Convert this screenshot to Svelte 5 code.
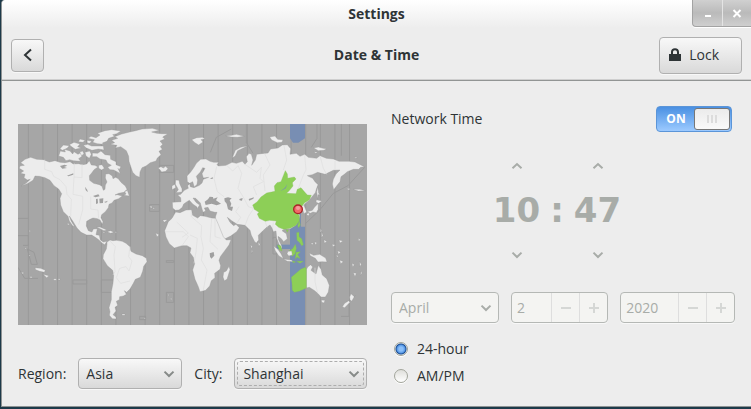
<script>
  let region = $state('Asia');
  let city = $state('Shanghai');
  let networkTime = $state(true);
  let hour = $state(10);
  let minute = $state(47);
  let month = $state('April');
  let day = $state(2);
  let year = $state(2020);
  let format = $state('24h');

  const regions = ['Africa', 'America', 'Asia', 'Australia', 'Europe', 'Pacific'];
  const cities = ['Hong Kong', 'Seoul', 'Shanghai', 'Singapore', 'Tokyo'];
  const months = [
    'January', 'February', 'March', 'April', 'May', 'June', 'July',
    'August', 'September', 'October', 'November', 'December',
  ];

  // One line per hour of UTC offset
  const meridians = Array.from({ length: 23 }, (_, i) => 31 + i * 43.8);

  // Wrap a value inside 0..size-1
  function wrap(value, size) {
    return (value + size) % size;
  }

  function pad(value) {
    return String(value).padStart(2, '0');
  }
</script>

{#snippet chevron(direction)}
  <svg class="chevron" viewBox="0 0 12 8" aria-hidden="true">
    <path d={direction === 'up' ? 'M1.5 6.2 6 2l4.5 4.2' : 'M1.5 1.6 6 6l4.5-4.4'} />
  </svg>
{/snippet}

{#snippet spinner(label, value, step, cls)}
  <div class="spin {cls}">
    <input type="text" aria-label={label} {value} disabled={networkTime} />
    <button type="button" aria-label="Decrease {label}" disabled={networkTime} onclick={() => step(-1)}>
      <svg viewBox="0 0 12 12" aria-hidden="true"><path d="M1 6h10" /></svg>
    </button>
    <button type="button" aria-label="Increase {label}" disabled={networkTime} onclick={() => step(1)}>
      <svg viewBox="0 0 12 12" aria-hidden="true"><path d="M1 6h10M6 1v10" /></svg>
    </button>
  </div>
{/snippet}

<div class="desktop">
  <div class="window">
    <div class="titlebar">
      <h1>Settings</h1>
      <div class="controls">
        <button type="button" aria-label="Minimize">
          <svg viewBox="0 0 12 12" aria-hidden="true"><path d="M3 9h6" /></svg>
        </button>
        <button type="button" aria-label="Close">
          <svg viewBox="0 0 12 12" aria-hidden="true"><path d="m2.5 3 7 7m0-7-7 7" /></svg>
        </button>
      </div>
    </div>

    <header>
      <button type="button" class="raised back" aria-label="Back">
        <svg viewBox="0 0 12 14" aria-hidden="true"><path d="M9 1.500 3 7l6 5.500" /></svg>
      </button>
      <h2>Date &amp; Time</h2>
      <button type="button" class="raised lock">
        <svg viewBox="0 0 12 14" aria-hidden="true">
          <path fill-rule="evenodd" d="M0 13V6h2V4C2 1.700 3.400.3 6 .3s4 1.400 4 3.700v2h2v7zM4 6h4V4.200C8 2.900 7.300 2.200 6 2.200s-2 .7-2 2z" />
        </svg>
        Lock
      </button>
    </header>

    <main>
      <section class="location">
        <svg class="map" viewBox="0 0 1047 603" role="img" aria-label="World time zones">
          <rect width="1047" height="603" fill="#a6a6a6" />
          <g class="zones">
            {#each meridians as x}
              <path d="M{x} 0V603" />
            {/each}
            <path d="M0 283H31M0 335H31V364H15M165 468H206V480H165zM250 468H293V505H250zM445 505H467V535H445zM424 124H467V145H424zM395 242H424V262H395zM445 410H467V415H445zM0 430 20 463 60 463M28 375 40 421H58L48 385zM365 577H383V587H365z" />
            <path d="M1040 130 990 185 946 208 905 258 861 300M685 0V55L705 88M640 15 595 40 577 85M897 0V43L880 70M970 0V95M800 340H765V390H785M780 305H765V345M969 577H993V532L1012 515" />
          </g>
          <!-- highlighted UTC+8 band -->
          <path class="band" d="M816 0H861V43L841 56H825L816 43zM842 255H849V308H861V603H816V300z" />
          <path class="band" d="M776 362H817V375H776z" />

          <!-- Americas and the north Atlantic -->
          <g class="land" transform="translate(-24 -27)">
            <path d="M28 160 30 153 43 151 32 143 45 133 62 127 80 133 100 134 118 141 135 137 150 142 165 143 180 140 190 147 205 146 218 149 230 147 238 137 244 150 255 151 264 156 252 164 245 174 238 182 239 196 251 205 268 209 276 214 280 226 285 223 286 210 291 201 286 189 287 177 297 176 307 183 309 191 317 187 325 191 333 202 346 213 351 223 342 232 326 235 315 240 322 239 337 243 326 251 312 256 306 264 297 268 295 278 286 290 275 299 273 308 279 320 277 328 270 315 262 311 249 309 240 313 230 319 229 333 235 347 246 351 250 342 262 341 258 359 268 361 271 375 280 381 291 379 284 389 276 384 266 374 256 367 245 360 230 360 213 352 201 339 190 321 178 303 183 317 193 334 189 334 178 318 174 304 160 290 152 270 150 250 155 236 146 222 132 212 120 196 105 188 88 184 75 183 69 196 52 206 33 213 49 204 61 193 52 195 42 188 45 178 31 175 41 168z" />
            <path d="M146 123 151 108 166 111 163 103 180 108 188 117 192 110 204 118 212 113 216 124 206 131 212 139 190 137 179 134 168 137 160 127z" />
            <path d="M150 101 160 90 178 92 171 100 157 106zM178 89 192 82 210 87 203 95 214 99 196 103 186 96zM209 111 218 108 222 116 215 122zM225 112 239 108 244 118 238 130 228 123zM210 72 225 76 219 82 205 80z" />
            <path d="M220 91 233 88 245 93 280 93 282 105 265 102 246 106 229 99zM231 76 245 78 240 85 232 84zM234 70 243 64 258 68 270 60 262 55 285 47 305 44 333 48 320 56 308 59 314 64 296 70 291 79 277 84 281 88 262 86 248 82 253 74z" />
            <path d="M247 114 263 115 273 108 285 119 301 121 302 133 318 140 318 149 333 155 327 165 324 160 331 176 321 170 311 165 300 164 293 157 304 151 293 145 288 135 270 132 260 125 247 125zM266 151 276 149 283 160 275 165 266 160zM344 230 352 226 358 243 341 241 348 237z" />
            <path d="M300 88 314 83 305 76 323 70 314 65 335 57 359 51 377 47 396 42 427 40 448 46 425 51 440 55 455 56 474 56 458 66 464 72 450 78 458 88 451 95 457 103 447 109 453 119 442 129 438 138 421 143 408 153 396 158 390 171 389 187 378 182 368 172 362 154 357 139 356 124 349 107 332 95 316 99 321 91z" />
            <path d="M444 159 453 155 460 159 467 154 474 161 467 169 455 171 450 164z" />
            <path d="M259 337 270 336 291 345 282 347 270 341zM291 350 302 347 312 352 302 355zM278 350 286 352 281 354zM315 350 322 351 316 353zM172 325 179 327 174 331z" />
            <path d="M291 381 300 375 309 377 320 376 337 379 348 385 360 395 363 409 378 417 397 422 409 430 411 440 401 454 398 469 391 487 376 493 370 505 360 522 350 532 343 527 349 538 340 543 329 545 328 554 319 559 323 571 315 577 318 588 309 599 318 606 318 612 307 611 298 601 300 590 297 578 304 554 304 530 309 505 311 480 308 466 292 452 279 431 280 419 289 402 291 388z" />
            <path d="M336 597H345V601H336zM402 608 407 610 403 612zM75 458 92 460 106 466 103 472 89 469 77 464zM99 478 117 482 110 488zM35 471 43 474 36 477zM131 491H139V496H131zM145 491H150V495H145zM61 484 68 487 61 490zM57 346 63 348 58 350zM45 398 50 400 46 403zM57 419 62 422 58 424zM418 275 425 273 426 280zM428 278 434 279 431 283zM437 354 447 359 441 366zM458 315 473 314 463 322zM482 549 486 551 483 556zM474 538 478 540 475 543z" />
            <g class="water">
              <path d="M150 153 164 149 172 152 162 156 171 159 157 161zM171 182 190 175 190 179 175 184zM225 215 232 225 233 232 227 225zM249 243 265 238 269 244 256 247zM258 252 263 251 264 265 258 267zM268 251 280 250 279 264 269 265zM282 261 294 257 288 263z" />
            </g>
            <path class="border" d="M104 134V163L125 170 131 184 150 194 168 215 171 238 184 253 182 305M193 145 192 186 216 188V147M192 186 189 238 218 244V285L206 329M242 245V282L264 285 266 311M300 378 316 395 312 420 315 470 309 480M360 395 356 425 366 438 357 468 348 455 329 460 319 488 332 505 360 498" />
          </g>

          <!-- Europe, Africa, Asia, Oceania -->
          <g class="land" transform="translate(516 -27)">
            <path d="M-53 262-52 279-44 286-33 285-23 277-19 267-9 260-2 256 8 267 21 276 21 282 29 270 18 262 9 249 17 250 31 264 35 278 39 292 47 288 43 279 54 277 60 288 75 292 81 292 77 303 75 318 82 335 90 350 97 370 104 372 122 363 140 350 148 338 138 328 131 332 120 322 112 307 126 318 142 328 165 331 174 340 180 346 184 361 194 380 199 384 206 375 205 361 218 348 230 337 240 330 246 339 250 350 258 348 260 370 267 388 276 403 275 393 266 375 264 364 274 371 281 380 292 371 289 356 276 347 286 341 300 342 318 331 326 316 330 301 318 287 320 278 332 278 338 284 342 296 350 291 345 278 341 270 358 255 376 233 380 220 384 209 375 200 368 190 352 182 367 179 383 172 405 178 430 166 450 165 438 177 430 193 427 207 431 224 442 210 450 200 453 185 463 178 472 170 490 163 506 163 512 157 523 155 505 146 495 141 477 139 447 139 430 132 409 130 390 122 380 130 355 127 344 118 330 124 319 115 300 118 302 101 292 89 277 90 264 99 242 102 234 114 214 116 200 118 196 135 185 151 189 135 184 118 177 115 169 125 172 140 165 148 157 139 139 145 126 142 108 151 85 153 81 149 86 142 71 142 60 139 48 132 32 133 19 145 12 157 2 171-9 183-8 200-1 205 8 200 13 216 21 208 23 195 19 184 31 171 38 158 45 160 36 176 40 189 56 187 40 193 36 204 28 211 12 218 1 215-1 206-7 212-5 220-17 226-28 238-37 240-28 248-27 260z" />
            <path d="M-43 291-30 293-12 285 4 284 8 301 23 309 31 302 45 304 65 309 77 310 85 328 93 348 100 365 109 375 123 374 117 390 102 410 91 425 87 436 92 452 90 463 74 475 75 488 64 497 59 513 47 526 30 530 25 515 15 493 8 465 14 446 10 427 0 413 3 399-9 392-24 392-47 399-62 386-72 366-76 347-65 320-54 310z" />
            <path d="M101 472 109 468 117 454 120 464 111 493 103 497 99 486zM-43 195-33 196-31 206-24 221-24 231-42 233-35 224-39 216-44 208zM-54 212-45 208-43 218-54 224zM127 128 136 106 152 97 173 92 160 99 143 107 135 124zM5 74 20 68 37 67 45 71 33 74 39 81 26 90 15 83zM239 66 255 63 263 73 279 74 276 82 262 83 245 75zM371 99 385 96 399 100 410 101 402 106 385 107zM372 110 384 112 377 115zM107 62 125 61 139 58 163 64 142 67 123 66zM493 126 504 128 497 130zM383 215 386 235 390 239 384 239 383 252 380 230zM379 254 396 258 386 265 378 262zM385 265 384 284 379 293 369 291 361 295 352 290 367 286 374 276zM354 294 359 296 355 303 350 298zM204 380 210 388 207 394zM251 394 263 402 273 416 280 431 266 422 256 407zM280 432 304 435 310 440 292 439zM358 414 371 421 389 418 407 429 411 441 396 440 384 441 376 430 361 422z" />
            <path d="M349 464 353 456 362 449 368 456 363 466 378 477 385 451 393 463 397 480 410 491 418 511 415 531 406 546 393 546 383 535 374 527 358 517 349 519zM394 555 405 556 402 564 395 562zM483 536 493 545 485 559 480 554 479 546zM476 557 480 562 464 578 457 575 464 565zM392 340 395 349 391 352zM395 350 399 362 395 367zM363 385 370 383 367 390zM374 380 381 384 376 389zM402 374 411 380 403 384zM426 388 436 390 429 395zM447 375 459 378 450 384zM440 419 445 424 441 427zM449 435 460 440 452 446zM490 473 499 475 495 485zM486 445 493 449 488 456zM509 440 514 448 510 455zM513 468 516 474 512 481zM182 390 187 394 184 401zM185 405 188 408 185 415zM472 220 482 222 474 225zM489 223 510 223 526 227 505 228zM505 370 512 375 506 378zM443 407 452 412 445 417z" />
            <path class="green" d="M188 270 201 261 213 246 230 234 255 229 253 213 261 203 273 200 280 182 286 167 292 177 293 190 302 188 313 186 318 192 307 203 309 213 296 229 289 235 318 236 322 223 333 218 342 229 352 240 364 241 358 254 343 264 334 276 320 281 316 290 328 301 328 318 318 331 300 340 281 343 266 337 256 328 259 318 239 316 226 319 208 310 202 297 207 292 193 283z" />
            <path class="green" d="M304 487 320 473 332 463 346 457 349 464V519L329 528 313 532 307 526 306 505zM262 390 272 392 276 408 268 404zM298 407 308 401 316 388 319 400 315 416 307 424 301 417zM318 412 331 410 323 419 331 431 321 426 316 432zM320 353 327 352 327 365 335 371 340 389 335 392 328 382 321 376zM328 318 331 330 326 338 323 332zM288 344 295 345 292 352zM308 438 317 441 309 443zM320 439 340 439 330 445z" />
            <path d="M294 409 305 408 307 420 296 423 291 416z" />
            <g class="water">
              <path d="M44 260 54 253 59 245 69 246 70 251 83 247 78 256 93 266 80 271 65 266 47 270zM103 250 114 247 125 250 119 256 124 266 121 275 129 275 126 288 114 283 110 266 104 259zM148 252 158 249 156 257 149 256zM59 415 71 411 73 422 64 431 60 425zM60 191 68 186 68 192zM176 252 192 247 190 251 178 257z" />
              <path class="lake" d="M272 228 285 218 292 207 287 220 277 226z" />
            </g>
            <path class="border" d="M4 286V305L35 332 33 365 40 400 34 435 51 465 40 525M75 311 75 365 92 370M80 155 72 190 82 230 102 245M110 151 128 168 144 152 155 175 144 220 162 250 175 275 190 280M165 148 200 172 214 157 210 190 220 200 190 215 200 240M224 116 240 150 220 180 225 228M282 92 290 135 280 165M344 120 348 165 340 180 325 220M390 122 400 160 410 178M435 138V165M-75 350-20 350-5 365-24 392M0 360 22 370 18 410 12 445M65 310 60 380 84 403M375 458V500L383 535M147 275 137 290 152 307 140 325M190 282 175 305 166 330M232 337 226 322M248 339 250 322M-40 321-5 354-24 367" />
          </g>

          <!-- selected city -->
          <circle class="pin" cx="840" cy="256" r="13" />
          <circle class="pin-shine" cx="840" cy="252" r="6" />
        </svg>

        <div class="place">
          <label for="region">Region:</label>
          <div class="combo raised region">
            <select id="region" bind:value={region}>
              {#each regions as name}
                <option>{name}</option>
              {/each}
            </select>
            {@render chevron('down')}
          </div>
          <label for="city">City:</label>
          <div class="combo raised city">
            <select id="city" class="focused" bind:value={city}>
              {#each cities as name}
                <option>{name}</option>
              {/each}
            </select>
            {@render chevron('down')}
          </div>
        </div>
      </section>

      <section class="clock">
        <div class="network">
          <label for="network-time">Network Time</label>
          <div class="switch" class:on={networkTime}>
            <input id="network-time" type="checkbox" role="switch" bind:checked={networkTime} />
            <span class="state">{networkTime ? 'ON' : 'OFF'}</span>
            <span class="knob"><i></i><i></i><i></i></span>
          </div>
        </div>

        <div class="time">
          <button type="button" aria-label="Hour up" disabled={networkTime} onclick={() => (hour = wrap(hour + 1, 24))}>
            {@render chevron('up')}
          </button>
          <span></span>
          <button type="button" aria-label="Minute up" disabled={networkTime} onclick={() => (minute = wrap(minute + 1, 60))}>
            {@render chevron('up')}
          </button>
          <span class="digits">{pad(hour)}</span>
          <span class="digits">:</span>
          <span class="digits">{pad(minute)}</span>
          <button type="button" aria-label="Hour down" disabled={networkTime} onclick={() => (hour = wrap(hour - 1, 24))}>
            {@render chevron('down')}
          </button>
          <span></span>
          <button type="button" aria-label="Minute down" disabled={networkTime} onclick={() => (minute = wrap(minute - 1, 60))}>
            {@render chevron('down')}
          </button>
        </div>

        <div class="date">
          <div class="combo flat month">
            <select aria-label="Month" bind:value={month} disabled={networkTime}>
              {#each months as name}
                <option>{name}</option>
              {/each}
            </select>
            {@render chevron('down')}
          </div>
          {@render spinner('day', day, (n) => (day += n), 'day')}
          {@render spinner('year', year, (n) => (year += n), 'year')}
        </div>

        <div class="formats">
          <label><input type="radio" value="24h" bind:group={format} />24-hour</label>
          <label><input type="radio" value="ampm" bind:group={format} />AM/PM</label>
        </div>
      </section>
    </main>
  </div>
</div>

<style>
  :global(body) {
    background: #1d3a49;
  }

  .desktop {
    display: flex;
    box-sizing: border-box;
    min-height: 100vh;
    padding: 0 0 2px 1px;
    color: #2e3436;
    font: 14px/20px 'Open Sans', 'Noto Sans', sans-serif;
  }

  .window {
    display: flex;
    flex: 1;
    flex-direction: column;
    min-width: 0;
    border: solid #8f9394;
    border-width: 0 0 1px 1px;
    border-top-left-radius: 4px;
    background: #ededed;
  }

  button,
  input,
  select {
    box-sizing: border-box;
    margin: 0;
    color: inherit;
    font: inherit;
  }

  svg {
    display: block;
    fill: none;
    stroke: currentColor;
    stroke-width: 2;
  }

  h1,
  h2 {
    grid-column: 2;
    margin: 0;
    font-size: 14px;
    font-weight: 700;
  }

  /* Title bar */
  .titlebar {
    display: grid;
    grid-template-columns: 1fr auto 1fr;
    align-items: center;
    height: 28px;
    border-top-left-radius: 4px;
    background: linear-gradient(#fff, #ededed);
  }

  .controls {
    display: flex;
    justify-self: end;
    align-self: start;
    height: 27px;
    box-sizing: border-box;
    border: solid #a3a3a3;
    border-width: 0 0 1px 1px;
    border-bottom-left-radius: 4px;
    background: linear-gradient(#d0d0d0, #bababa 50%, #cfcfcf);
    box-shadow: 0 1px #fff;
  }

  .controls button {
    display: grid;
    place-items: center;
    width: 29px;
    padding: 0;
    border: 0;
    background: none;
    color: #fff;
  }

  .controls button + button {
    border-left: 1px solid #e4e4e4;
  }

  .controls svg {
    width: 12px;
  }

  /* Header */
  header {
    display: grid;
    grid-template-columns: 1fr auto 1fr;
    align-items: center;
    height: 53px;
    box-sizing: border-box;
    padding: 2px 9px 0;
    border-bottom: 1px solid #929594;
    box-shadow: inset 0 -1px #cfcfcf;
  }

  .raised {
    border: 1px solid #b0b0b0;
    border-radius: 4px;
    background: linear-gradient(#f8f8f8, #d9d9d9);
    box-shadow: 0 1px #f8f8f8;
  }

  .back {
    display: grid;
    place-items: center;
    width: 33px;
    height: 33px;
    padding: 0;
  }

  .back svg {
    width: 12px;
  }

  .lock {
    display: flex;
    align-items: center;
    justify-self: end;
    gap: 8px;
    height: 37px;
    padding: 0 22px 0 9px;
  }

  .lock svg {
    width: 12px;
    fill: currentColor;
    stroke: none;
  }

  main {
    display: grid;
    flex: 1;
    grid-template-columns: minmax(0, 349fr) minmax(0, 344fr);
    gap: 24px;
    padding: 25px 16px 16px;
  }

  /* Map */
  .location {
    display: flex;
    flex-direction: column;
    gap: 33px;
    padding-top: 18px;
  }

  .map {
    width: 100%;
    stroke: none;
  }

  .zones {
    fill: none;
    stroke: #999;
    stroke-width: 3;
  }

  .band {
    fill: #788eb3;
  }

  .land {
    fill: #ececec;
    stroke: #919191;
    stroke-width: 1;
  }

  .land .water {
    fill: #a0a0a0;
    stroke: none;
  }

  .land .green {
    fill: #8dcf57;
    stroke: #82bd55;
  }

  .land .lake {
    fill: #788eb3;
  }

  .land .border {
    fill: none;
    stroke: #dedede;
    stroke-width: 2;
  }

  .pin {
    fill: #f06a6a;
    stroke: #a82428;
    stroke-width: 4;
  }

  .pin-shine {
    fill: #f59a9a;
  }

  .place,
  .date {
    display: flex;
    align-items: center;
    gap: 12px;
  }

  /* Drop-downs: the arrow shares the cell of the select */
  .combo {
    display: grid;
    align-items: center;
    box-sizing: border-box;
    min-width: 0;
    height: 31px;
  }

  .combo select {
    grid-area: 1 / 1;
    width: 100%;
    height: 100%;
    padding: 0 24px 0 7px;
    border: 0;
    appearance: none;
    background: none;
    opacity: 1;
  }

  .combo .chevron {
    grid-area: 1 / 1;
    justify-self: end;
    margin-right: 6px;
    color: #868a88;
    pointer-events: none;
  }

  .combo select.focused {
    width: auto;
    height: auto;
    align-self: stretch;
    margin: 2px;
    padding-left: 5px;
    border: 1px dashed #adadad;
    border-radius: 3px;
    outline: none;
  }

  .chevron {
    width: 12px;
  }

  .region {
    width: 104px;
  }

  .city {
    flex: 1;
  }

  .flat,
  .spin {
    border: 1px solid #b5b8b5;
    border-radius: 4px;
    background: #f4f4f2;
    box-shadow: 0 1px #f8f8f8;
    color: #a8aca8;
  }

  .flat .chevron {
    color: #a8aca8;
  }

  /* Clock */
  .clock {
    display: flex;
    flex-direction: column;
  }

  .network {
    display: flex;
    align-items: center;
    justify-content: space-between;
    padding-right: 3px;
  }

  .switch {
    display: grid;
    grid-template-columns: 1fr 36px;
    align-items: center;
    box-sizing: border-box;
    width: 76px;
    height: 26px;
    padding: 1px;
    border: 1px solid #8f8f8f;
    border-radius: 4px;
    background: #d6d6d6;
  }

  .switch.on {
    border-color: #5b95d8;
    background: linear-gradient(#4a90e2, #9ccaff);
  }

  .switch input {
    grid-area: 1 / 1 / 2 / 3;
    width: 100%;
    height: 100%;
    appearance: none;
  }

  .state,
  .knob {
    grid-row: 1;
    pointer-events: none;
  }

  .state {
    grid-column: 1;
    color: #fff;
    font-size: 12px;
    font-weight: 700;
    text-align: center;
  }

  .knob {
    display: flex;
    grid-column: 2;
    align-items: center;
    justify-content: center;
    gap: 2px;
    box-sizing: border-box;
    height: 22px;
    border: 1px solid #777;
    border-radius: 3px;
    background: linear-gradient(#ebebeb, #fafafa);
  }

  .knob i {
    width: 2px;
    height: 8px;
    background: #dcdcdc;
  }

  .time {
    display: grid;
    grid-template-columns: 50px 31px 50px;
    justify-content: center;
    justify-items: center;
    align-items: center;
    padding: 26px 12px 29px 0;
    color: #a8aca8;
  }

  .time button {
    padding: 4px;
    border: 0;
    background: none;
    color: #a8aca8;
  }

  .digits {
    font: 700 34px/73px 'DejaVu Sans', sans-serif;
  }

  .month {
    flex: 108 0 0;
  }

  .spin {
    display: flex;
    box-sizing: border-box;
    min-width: 0;
    height: 31px;
  }

  .day {
    flex: 97 0 0;
  }

  .year {
    flex: 115 0 0;
  }

  .spin input {
    flex: 1;
    width: 0;
    min-width: 0;
    padding: 0 5px;
    border: 0;
    background: none;
  }

  .spin button {
    display: grid;
    flex: none;
    place-items: center;
    width: 28px;
    padding: 0;
    border: 0;
    border-left: 1px solid #dedede;
    background: none;
    color: #d5d7d5;
  }

  .spin svg {
    width: 12px;
  }

  .formats {
    display: flex;
    flex-direction: column;
    align-items: flex-start;
    gap: 7px;
    padding: 16px 3px 0;
  }

  .formats label {
    display: flex;
    align-items: center;
    gap: 9px;
  }

  .formats input {
    width: 14px;
    height: 14px;
    border: 1px solid #a2a59b;
    border-radius: 50%;
    appearance: none;
    background: linear-gradient(#dfdfdb, #fff);
    box-shadow: 0 1px #fff;
  }

  .formats input:checked {
    background: radial-gradient(circle, #8cc0fa 2px, #5597e6 4px, #17498e 5px, #e4e9ef 6px);
  }
</style>
